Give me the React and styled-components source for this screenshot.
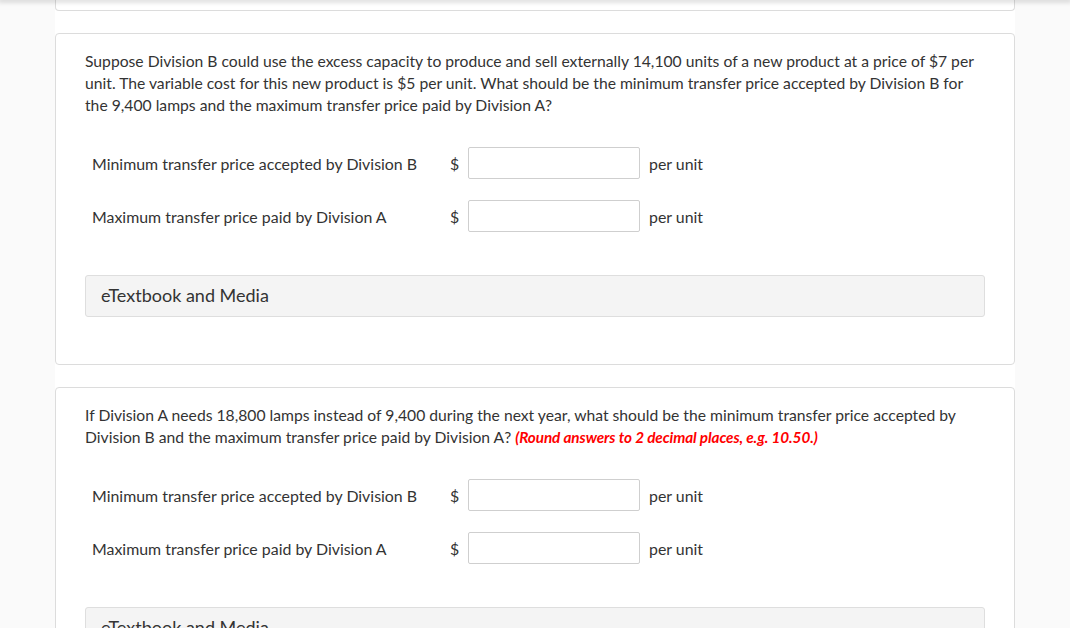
import React from "react";
import styled, { createGlobalStyle } from "styled-components";

const GlobalStyle = createGlobalStyle`
  body {
    margin: 0;
    background: #fafafa;
    font-family: Lato, "Open Sans", sans-serif;
    color: #333;
  }
`;

const TopShadow = styled.div`
  position: fixed;
  top: 0;
  left: 0;
  right: 0;
  height: 0;
  box-shadow: 0 0 5px 2px rgba(0, 0, 0, 0.18);
  z-index: 5;
`;

const Column = styled.main`
  width: 960px;
  margin-left: 55px;
  background: #fff;
  min-height: 628px;
  display: flex;
  flex-direction: column;
  gap: 22px;
`;

const Card = styled.section`
  background: #fff;
  border: 1px solid #dcdcdc;
  border-radius: 4px;
  padding: 16px 29px 47px;
`;

const Stub = styled.div`
  height: 10px;
  border: 1px solid #dcdcdc;
  border-top: none;
  border-radius: 0 0 4px 4px;
`;

const Question = styled.p`
  margin: 0;
  font-size: 15.7px;
  line-height: 22px;
  color: #333;
`;

const Hint = styled.span`
  color: #ff0000;
  font-weight: 700;
  font-style: italic;
  font-size: 15.3px;
  letter-spacing: -0.1px;
`;

const Form = styled.div`
  margin-top: 31px;
  display: flex;
  flex-direction: column;
  gap: 21px;
  padding-left: 7px;
`;

const Row = styled.div`
  display: flex;
  align-items: center;
  height: 32px;
  font-size: 15.9px;
`;

const Label = styled.span`
  width: 358px;
`;

const Dollar = styled.span`
  width: 18px;
`;

const Input = styled.input`
  width: 172px;
  height: 32px;
  box-sizing: border-box;
  border: 1px solid #cfcfcf;
  border-radius: 2px;
  padding: 0 8px;
  font: inherit;
  &:focus {
    outline: none;
  }
`;

const Unit = styled.span`
  margin-left: 9px;
`;

const Media = styled.div`
  margin-top: 43px;
  height: 40px;
  display: flex;
  align-items: center;
  padding: 0 0 2px 15px;
  box-sizing: content-box;
  height: 38px;
  background: #f4f4f4;
  border: 1px solid #dedede;
  border-radius: 3px;
  font-size: 18px;
  color: #333;
`;

const Field = ({ label }) => (
  <Row>
    <Label>{label}</Label>
    <Dollar>$</Dollar>
    <Input type="text" />
    <Unit>per unit</Unit>
  </Row>
);

const Fields = () => (
  <Form>
    <Field label="Minimum transfer price accepted by Division B" />
    <Field label="Maximum transfer price paid by Division A" />
  </Form>
);

export default function App() {
  return (
    <>
      <GlobalStyle />
      <TopShadow />
      <Column>
        <Stub />
        <Card>
          <Question>
            Suppose Division B could use the excess capacity to produce and sell externally 14,100 units of a new
            product at a price of $7 per unit. The variable cost for this new product is $5 per unit. What should be
            the minimum transfer price accepted by Division B for the 9,400 lamps and the maximum transfer price paid
            by Division A?
          </Question>
          <Fields />
          <Media>eTextbook and Media</Media>
        </Card>
        <Card>
          <Question>
            If Division A needs 18,800 lamps instead of 9,400 during the next year, what should be the minimum transfer
            price accepted by Division B and the maximum transfer price paid by Division A?{" "}
            <Hint>(Round answers to 2 decimal places, e.g. 10.50.)</Hint>
          </Question>
          <Fields />
          <Media>eTextbook and Media</Media>
        </Card>
      </Column>
    </>
  );
}
